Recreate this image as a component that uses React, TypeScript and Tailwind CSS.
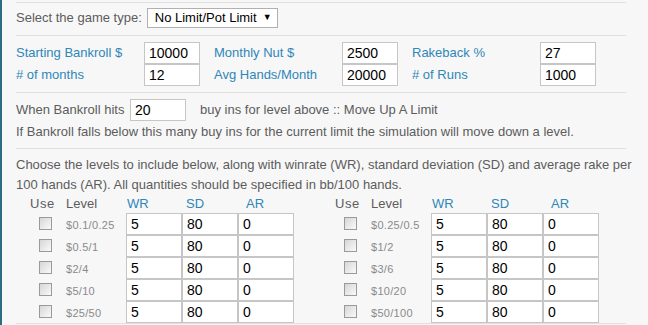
const blue = 'text-[#2f86b8]';

// Casilla al estilo antiguo de Windows
function Check() {
  return (
    <span className="block w-[13px] h-[13px] border border-[#9a9a9a] bg-gradient-to-br from-[#d6d6d6] to-[#fafafa]" />
  );
}

function Field({ value, w = 'w-[56px]' }: { value: string; w?: string }) {
  return (
    <div className={`${w} h-[22px] bg-white border border-[#c6c6c6] pl-[4px] text-[14px] leading-[20px] text-black`}>
      {value}
    </div>
  );
}

const Line = () => <div className="h-px bg-[#e0e0e0] w-[610px]" />;

type Level = { name: string };

function LevelTable({ levels }: { levels: Level[] }) {
  return (
    <div className="w-[278px]">
      <div className="flex h-[18px] leading-[18px] text-[13px]">
        <div className="w-[46px] pl-[14px] tracking-[0.5px]">Use</div>
        <div className="w-[64px] pl-[4px]">Level</div>
        <div className={`w-[56px] pl-[1px] ${blue}`}>WR</div>
        <div className={`w-[56px] pl-[4px] ${blue}`}>SD</div>
        <div className={`w-[56px] pl-[8px] ${blue}`}>AR</div>
      </div>
      {levels.map((l) => (
        <div key={l.name} className="flex h-[22px]">
          <div className="w-[46px] pl-[23px] pt-[4px]">
            <Check />
          </div>
          <div className="w-[64px] pl-[4px] pt-[5px] text-[11px] leading-[14px] text-[#8a8a8a] tracking-[0.3px]">{l.name}</div>
          <Field value="5" />
          <Field value="80" />
          <Field value="0" />
        </div>
      ))}
    </div>
  );
}

export default function App() {
  const left = [{ name: '$0.1/0.25' }, { name: '$0.5/1' }, { name: '$2/4' }, { name: '$5/10' }, { name: '$25/50' }];
  const right = [{ name: '$0.25/0.5' }, { name: '$1/2' }, { name: '$3/6' }, { name: '$10/20' }, { name: '$50/100' }];

  return (
    <div
      className="w-[648px] h-[325px] overflow-hidden bg-[#f7f7f7] border-l-2 border-[#2b6e84] pl-[14px] pt-[2px] text-[13px] text-[#5c5c5c]"
      style={{ fontFamily: '"Liberation Sans", Arial, sans-serif' }}
    >
      <Line />
      {/* Tipo de juego */}
      <div className="flex items-center h-[32px] pt-[4px] pb-[6px]">
        <span>Select the game type:</span>
        <div className="ml-[5px] w-[131px] h-[20px] bg-white border border-[#b0b0b0] flex items-center pl-[7px] pr-[5px] text-black text-[13px]">
          <span className="flex-1">No Limit/Pot Limit</span>
          <span className="text-[9px]">▼</span>
        </div>
      </div>
      <Line />
      {/* Parámetros */}
      <div className="pt-[6px] pb-[6px]">
        {[
          [['Starting Bankroll $', '10000'], ['Monthly Nut $', '2500'], ['Rakeback %', '27']],
          [['# of months', '12'], ['Avg Hands/Month', '20000'], ['# of Runs', '1000']],
        ].map((row, i) => (
          <div key={i} className="flex h-[22px]">
            {row.map(([label, val], j) => (
              <div key={j} className={`flex ${j > 0 ? 'ml-[14px]' : ''}`}>
                <div className={`w-[128px] leading-[22px] ${blue}`}>{label}</div>
                <Field value={val} />
              </div>
            ))}
          </div>
        ))}
      </div>
      <Line />
      {/* Límite */}
      <div className="pt-[6px] pb-[7px]">
        <div className="flex h-[22px] leading-[22px]">
          <span className="w-[114px]">When Bankroll hits</span>
          <Field value="20" w="w-[56px]" />
          <span className="ml-[14px]">buy ins for level above :: Move Up A Limit</span>
        </div>
        <div className="leading-[19px] mt-[1px]">
          If Bankroll falls below this many buy ins for the current limit the simulation will move down a level.
        </div>
      </div>
      <Line />
      <div className="pt-[6px] leading-[20px] whitespace-nowrap">
        Choose the levels to include below, along with winrate (WR), standard deviation (SD) and average rake per
        <br />
        100 hands (AR). All quantities should be specified in bb/100 hands.
      </div>
      <div className="flex gap-[27px]">
        <LevelTable levels={left} />
        <LevelTable levels={right} />
      </div>
      <Line />
    </div>
  );
}
